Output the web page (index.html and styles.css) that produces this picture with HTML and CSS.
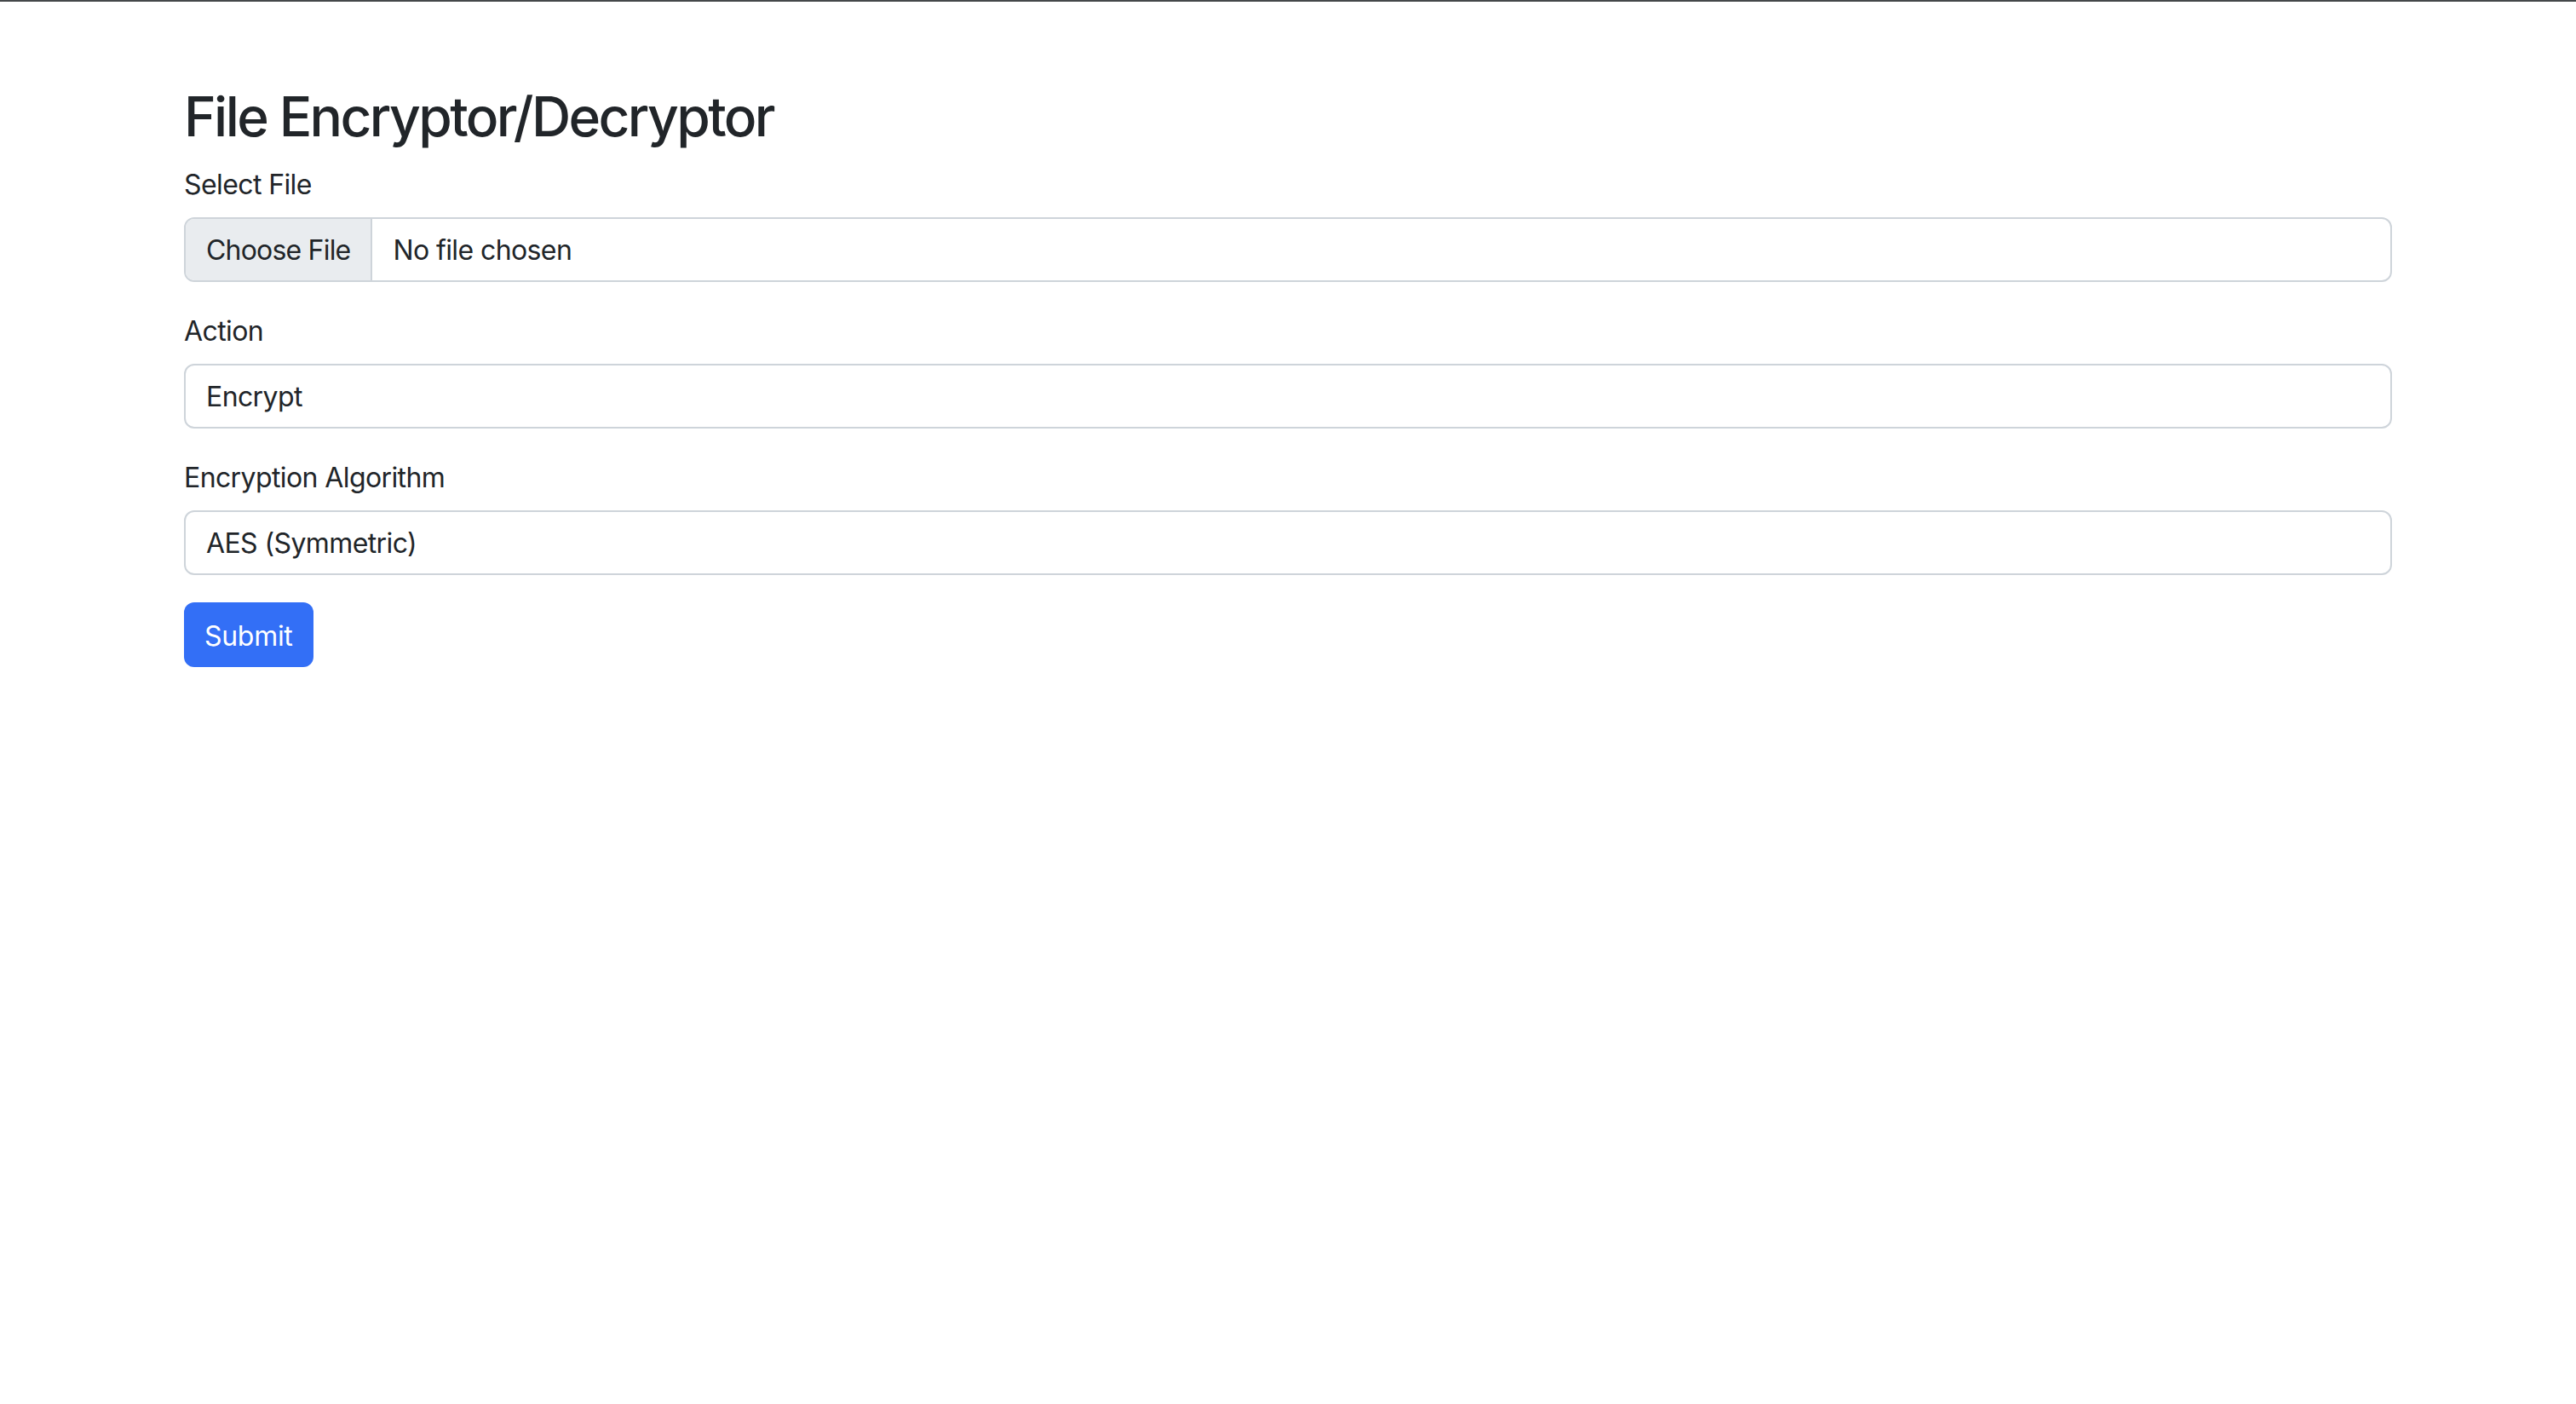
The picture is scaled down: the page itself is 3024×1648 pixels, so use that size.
FILE: index.html
```html
<!DOCTYPE html>
<html lang="en">
<head>
<meta charset="utf-8">
<title>File Encryptor/Decryptor</title>
<link rel="stylesheet" href="styles.css">
</head>
<body>
<div class="topline"></div>
<main class="container">
  <h2 class="title">File Encryptor/Decryptor</h2>
  <form class="form">
    <div class="field">
      <label class="label">Select File</label>
      <div class="control file-control">
        <span class="file-btn">Choose File</span>
        <span class="file-name">No file chosen</span>
      </div>
    </div>
    <div class="field">
      <label class="label">Action</label>
      <div class="control"><span class="value">Encrypt</span></div>
    </div>
    <div class="field">
      <label class="label">Encryption Algorithm</label>
      <div class="control"><span class="value">AES (Symmetric)</span></div>
    </div>
    <div class="actions">
      <button type="button" class="btn-primary">Submit</button>
    </div>
  </form>
</main>
</body>
</html>
```

FILE: styles.css
```css
* { box-sizing: border-box; }
html, body {
  margin: 0;
  padding: 0;
  background: #ffffff;
}
body {
  font-family: Inter, "Noto Sans", "Liberation Sans", sans-serif;
  color: #212529;
  font-size: 32px;
  line-height: 48px;
  letter-spacing: -0.6px;
}
.topline {
  height: 2px;
  background: #45484a;
}
.container {
  width: 2592px;
  margin: 96px 0 0 216px;
}
.title {
  margin: 0 0 16px 0;
  font-size: 64px;
  line-height: 77px;
  font-weight: 500;
  letter-spacing: -2.6px;
}
.field {
  margin-bottom: 32px;
}
.label {
  display: block;
  margin-bottom: 14px;
  padding-top: 2px;
  font-size: 32px;
  line-height: 48px;
}
.control {
  display: flex;
  align-items: center;
  height: 76px;
  border: 2px solid #ced4da;
  border-radius: 12px;
  padding: 2px 24px 0 24px;
  font-size: 32px;
  overflow: hidden;
}
.file-control {
  padding: 0;
}
.file-btn {
  display: flex;
  align-items: center;
  height: 100%;
  padding: 2px 24px 0 24px;
  background: #e9ecef;
  border-right: 2px solid #ced4da;
  letter-spacing: -0.8px;
}
.file-name {
  padding: 2px 0 0 24px;
}
.actions {
  display: flex;
}
.btn-primary {
  height: 76px;
  padding: 2px 24px 0 24px;
  border: none;
  border-radius: 12px;
  background: #336ff6;
  color: #ffffff;
  font-family: inherit;
  font-size: 32px;
  letter-spacing: -0.3px;
}
```
